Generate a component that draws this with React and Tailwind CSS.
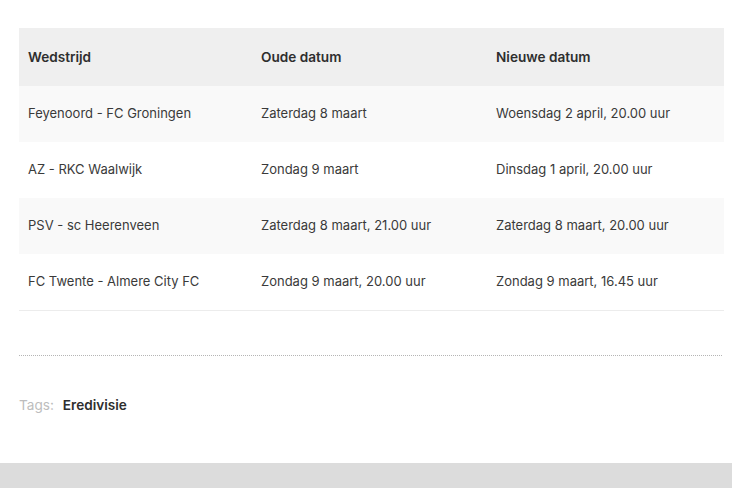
const rows = [
  ["Feyenoord - FC Groningen", "Zaterdag 8 maart", "Woensdag 2 april, 20.00 uur"],
  ["AZ - RKC Waalwijk", "Zondag 9 maart", "Dinsdag 1 april, 20.00 uur"],
  ["PSV - sc Heerenveen", "Zaterdag 8 maart, 21.00 uur", "Zaterdag 8 maart, 20.00 uur"],
  ["FC Twente - Almere City FC", "Zondag 9 maart, 20.00 uur", "Zondag 9 maart, 16.45 uur"],
];

export default function App() {
  return (
    <div className="w-[732px] h-[488px] bg-white flex flex-col overflow-hidden font-['Inter',sans-serif]">
      <div className="pt-[28px] pl-[19px] pr-[8px]">
        <table className="w-full border-collapse text-[13px] text-[#3a3a3a]">
          <thead>
            <tr className="bg-[#efefef] h-[58px] text-[13.6px]">
              <th className="w-[233px] pl-[9px] text-left font-semibold text-[#2e2e2e]">Wedstrijd</th>
              <th className="w-[235px] pl-[9px] text-left font-semibold text-[#2e2e2e]">Oude datum</th>
              <th className="pl-[9px] text-left font-semibold text-[#2e2e2e]">Nieuwe datum</th>
            </tr>
          </thead>
          <tbody>
            {rows.map((r, i) => (
              <tr
                key={i}
                className={`h-[56px] ${i % 2 === 0 ? "bg-[#f9f9f9]" : "bg-white"} ${i === rows.length - 1 ? "border-b border-[#ececec]" : ""}`}
              >
                {r.map((c, j) => (
                  <td key={j} className="pl-[9px]">{c}</td>
                ))}
              </tr>
            ))}
          </tbody>
        </table>
      </div>
      <div className="mt-[44px] mx-[19px] mr-[10px] border-t border-dotted border-[#b5b5b5]" />
      <div className="mt-[39px] pl-[19px] flex items-center gap-[9px] text-[13.6px]">
        <span className="text-[#bdbdbd]">Tags:</span>
        <span className="font-semibold text-[#2e2e2e]">Eredivisie</span>
      </div>
      <div className="mt-auto h-[25px] bg-[#dcdcdc]" />
    </div>
  );
}
